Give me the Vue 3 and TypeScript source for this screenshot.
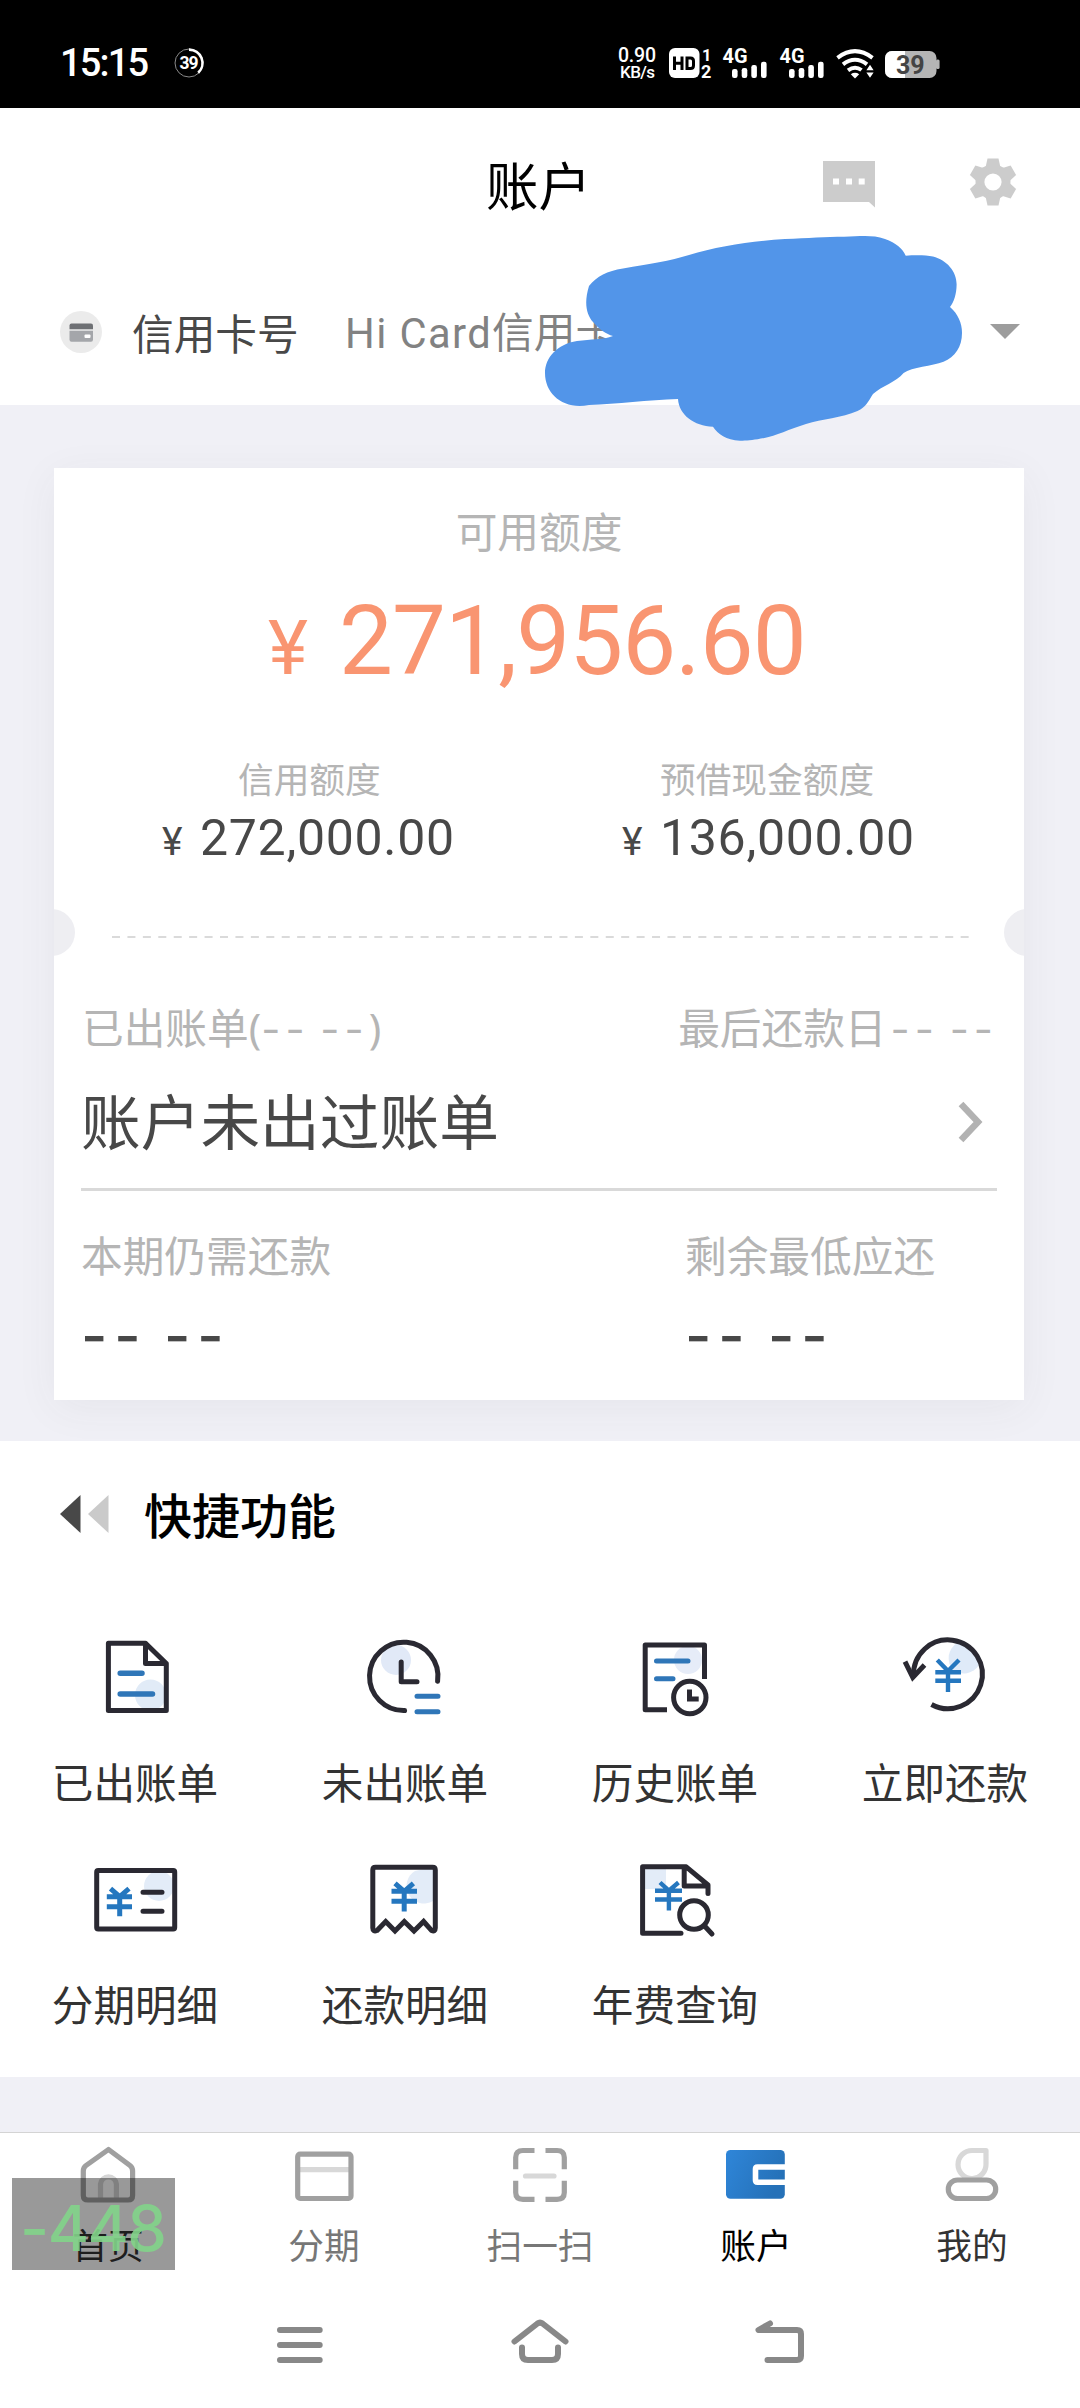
<script setup lang="ts">
interface Shortcut {
  id: string
  label: string
}

interface Tab {
  id: string
  label: string
  tone: string
}

const shortcuts: Shortcut[] = [
  { id: 'billed', label: '已出账单' },
  { id: 'unbilled', label: '未出账单' },
  { id: 'history', label: '历史账单' },
  { id: 'repay', label: '立即还款' },
  { id: 'instalment', label: '分期明细' },
  { id: 'repayments', label: '还款明细' },
  { id: 'fee', label: '年费查询' },
]

const tabs: Tab[] = [
  { id: 'home', label: '首页', tone: 'dark' },
  { id: 'card', label: '分期', tone: 'muted' },
  { id: 'scan', label: '扫一扫', tone: 'muted' },
  { id: 'wallet', label: '账户', tone: 'active' },
  { id: 'me', label: '我的', tone: 'dark' },
]

const signalOffsets: number[] = [0, 57]
</script>

<template>
  <div class="screen">
    <div class="status">
      <span class="clock">15:15</span>
      <svg class="ring" width="32" height="32" viewBox="0 0 32 32">
        <circle cx="16" cy="16" r="14" fill="none" stroke="#8a8a8a" stroke-width="1" />
        <path d="M16 2.6A13.4 13.4 0 0 1 25.2 25.8" fill="none" stroke="#fff" stroke-width="2.6" />
        <text x="16" y="22.4" text-anchor="middle" class="st bold" font-size="17.5" fill="#fff" textLength="19">39</text>
      </svg>
      <svg class="indicators" width="330" height="40" viewBox="614 43 330 40">
        <text x="618" y="62" class="st" font-size="19.5" fill="#fff" textLength="38">0.90</text>
        <text x="620" y="78" class="st" font-size="17" fill="#fff" textLength="35">KB/s</text>
        <rect x="669" y="48" width="30.5" height="30" rx="6" fill="#fff" />
        <path d="M674.5 56.5V70M682 56.5V70M674.5 63.2H682M687 58H690.5Q693.5 58 693.5 61V65.5Q693.5 68.5 690.5 68.5H687Z" fill="none" stroke="#000" stroke-width="3" />
        <text x="702" y="60.5" class="st bold" font-size="16.5" fill="#fff">1</text>
        <text x="701" y="78" class="st bold" font-size="18" fill="#fff">2</text>
        <g v-for="dx in signalOffsets" :key="dx" :transform="`translate(${dx} 0)`" fill="#fff">
          <text x="722.5" y="63" class="st bold" font-size="20.5" textLength="25" lengthAdjust="spacingAndGlyphs">4G</text>
          <rect x="732" y="69" width="5.6" height="9" rx="2.2" />
          <rect x="741.7" y="68" width="5.6" height="10" rx="2.2" />
          <rect x="751.3" y="65" width="5.6" height="13" rx="2.2" />
          <rect x="761" y="61.7" width="5.6" height="16.3" rx="2.2" />
        </g>
        <g fill="none" stroke="#fff" stroke-width="4">
          <path d="M837.5 57.8Q855 44.500 872.500 57.800" />
          <path d="M843 64.300Q855 55.200 867 64.300" />
          <path d="M848 70.300Q855 65.200 861.500 70" />
        </g>
        <path d="M850.800 74.200Q855 71.400 859.200 74.200L855 78.600Z" fill="#fff" />
        <path d="M870 64.800L873.600 70.200H866.400ZM870 77.800L873.600 72.400H866.400Z" fill="#fff" />
        <rect x="885" y="51" width="51.500" height="27" rx="7" fill="#b5b5b5" />
        <path d="M892 51H905V78H892A7 7 0 0 1 885 71V58A7 7 0 0 1 892 51Z" fill="#fff" />
        <rect x="936" y="59.500" width="3.600" height="9.500" rx="1.500" fill="#b5b5b5" />
        <text x="896" y="73.600" class="st bold" font-size="25" fill="#444" textLength="28.500">39</text>
      </svg>
    </div>

    <header class="titlebar">
      <h1>账户</h1>
      <svg class="chat" width="54" height="50" viewBox="0 0 54 50">
        <path d="M1 2H53V48.500L47 43H1Z" fill="#ccc" />
        <path d="M11 19.500h6v6h-6zM24 19.500h6v6h-6zM36.700 19.500h6v6h-6z" fill="#fff" />
      </svg>
      <svg class="gear" width="56" height="56" viewBox="-28 -28 56 56">
        <g fill="#ccc">
          <circle r="17.500" />
          <path v-for="a in [0, 60, 120]" :key="a" :transform="`rotate(${a})`" d="M-5.500 -23.500H5.500L8 -12V12L5.500 23.500H-5.500L-8 12V-12Z" />
        </g>
        <circle r="8.600" fill="#fff" />
      </svg>
    </header>

    <div class="cardrow">
      <svg width="42" height="42" viewBox="0 0 42 42">
        <circle cx="21" cy="21" r="21" fill="#ebebeb" />
        <path d="M9.500 18.200V14.500Q9.500 12.500 11.500 12.500H31Q33 12.500 33 14.500V18.200Z" fill="#6e7074" />
        <path d="M9.500 19.700H33V28.500Q33 30.700 31 30.700H11.500Q9.500 30.700 9.500 28.500Z" fill="#a4a6aa" />
        <rect x="24.500" y="23.500" width="6" height="3.600" rx="1" fill="#fff" />
      </svg>
      <span class="rowlabel">信用卡号</span>
      <span class="rowvalue"><span class="latin">Hi Card</span>信用卡</span>
      <svg class="caret" width="30" height="16" viewBox="0 0 30 16"><path d="M0 0H30L15 15Z" fill="#9d9d9d" /></svg>
      <svg class="scribble" width="430" height="220" viewBox="540 230 430 220">
        <path
          d="M593 322C586 314 584 302 589 286C597 276 607 271 623 268.500C650 264 670 261 689 255C718 246 755 241 785 239C808 238 826 236.700 844 236.700C860 236.500 872 234.500 885 239C896 243 903 249 905.700 255.700C915 255 926 255 933 256.500C947 260 957 272 956.600 285C956.500 294 954 302 950 307C958 314 962 323 962 333C962 347 955 357 943.500 361.700C932 366 912 367 903.600 373C896 382 882 386 873 394C868 402 866 407 857.500 411C842 418 822 419 806 424C790 429 775 436 764.500 438C754 440 747 441 740 440.700C726 440 718 434 713 426.700C694 426 679 415 678 399C648 400 617 404 589 405C563 410 545 394 545 373C545 358 557 344 577 341C591 339 603 340 613 336C606 334 600 330 593 322Z"
          fill="#5295e9"
        />
      </svg>
    </div>

    <main class="canvas">
      <section class="bill">
        <p class="grey avail">可用额度</p>
        <p class="amount"><span class="yen">¥</span>271,956.60</p>
        <div class="limits">
          <div class="limit">
            <p class="grey small">信用额度</p>
            <p class="sum"><span class="yen">¥</span>272,000.00</p>
          </div>
          <div class="limit cash">
            <p class="grey small">预借现金额度</p>
            <p class="sum"><span class="yen">¥</span>136,000.00</p>
          </div>
        </div>
        <div class="tear">
          <i class="notch left"></i>
          <svg width="858" height="4" viewBox="0 0 858 4"><path d="M1 2H858" stroke="#dadada" stroke-width="2" stroke-dasharray="8 7.430" /></svg>
          <i class="notch right"></i>
        </div>
        <div class="pair grey head">
          <span>已出账单<span class="paren">(</span><span class="dash">-- --</span><span class="paren">)</span></span>
          <span>最后还款日<span class="dash due">-- --</span></span>
        </div>
        <div class="pair none">
          <span>账户未出过账单</span>
          <svg width="28" height="44" viewBox="0 0 28 44"><path d="M3 4L20 22L3 40" fill="none" stroke="#b2b2b2" stroke-width="6.500" /></svg>
        </div>
        <div class="rule"></div>
        <div class="dues">
          <div class="duecol">
            <p class="grey">本期仍需还款</p>
            <p class="bigdash">-- --</p>
          </div>
          <div>
            <p class="grey">剩余最低应还</p>
            <p class="bigdash">-- --</p>
          </div>
        </div>
      </section>
    </main>

    <section class="quick">
      <div class="quickhead">
        <svg width="50" height="38" viewBox="0 0 50 38">
          <path d="M0 19L20.500 0V38Z" fill="#484848" />
          <path d="M28 19L48.500 0V38Z" fill="#cacaca" />
        </svg>
        <h2>快捷功能</h2>
      </div>
      <div class="grid">
        <div v-for="s in shortcuts" :key="s.id" class="cell">
          <svg width="100" height="100" viewBox="0 0 100 100" fill="none" stroke="#2a2932" stroke-width="5" stroke-linecap="round" stroke-linejoin="round">
            <template v-if="s.id === 'billed'">
              <circle cx="65.500" cy="67" r="15.500" fill="#e1ebf7" stroke="none" />
              <path d="M23.400 15.300H60.500L81.300 35.500V82.600H23.400ZM60.500 15.300V35.500H81.300" />
              <path d="M35.200 45.300H57M35.200 66H67.500" stroke="#2f76b8" stroke-width="5.500" />
            </template>
            <template v-else-if="s.id === 'unbilled'">
              <circle cx="41" cy="32" r="15" fill="#e1e9f7" stroke="none" />
              <path d="M82.600 53.200A34.200 34.200 0 1 0 49.600 82.600M46.200 34V53.700H62" />
              <path d="M62 68.300H83M62 83.700H83" stroke="#2f76b8" />
            </template>
            <template v-else-if="s.id === 'history'">
              <circle cx="63" cy="32" r="14" fill="#e6ecf8" stroke="none" />
              <path d="M79.500 51V17H20.200V81.800H42" stroke-linecap="butt" />
              <circle cx="64.800" cy="69.500" r="16.200" />
              <path d="M64.500 61.500V71H73.700" stroke-linecap="butt" stroke-linejoin="miter" />
              <path d="M31.500 33H63M31.500 50.700H48" stroke="#2f76b8" />
            </template>
            <template v-else-if="s.id === 'repay'">
              <path d="M58 42A18 18 0 0 1 62 15Q78 20 84 37A18 18 0 0 1 58 42Z" fill="#dfeaf8" stroke="none" />
              <path d="M18.600 48A34.400 34.400 0 1 1 36.500 76.500" stroke-linecap="butt" />
              <path d="M10 33.700L17.800 49.500L29.500 37" stroke-linecap="butt" stroke-linejoin="miter" />
              <path d="M42.300 32L53 43L64 32M53 43V64M40.300 44.300H66M40.300 52.700H66" stroke="#2577bf" stroke-width="4.400" stroke-linecap="butt" />
            </template>
            <template v-else-if="s.id === 'instalment'">
              <circle cx="74" cy="36" r="15" fill="#e3ecf8" stroke="none" />
              <rect x="11.700" y="20.600" width="78" height="58.400" rx="1.500" />
              <path d="M58 42.300H77M58 61.300H77" />
              <path d="M25.500 38.700L34.700 46.700L44 38.700M34.700 46.700V66.300M21.800 46.700H47M21.800 56.700H47" stroke="#2577bf" stroke-linecap="butt" />
            </template>
            <template v-else-if="s.id === 'repayments'">
              <path d="M78 17V51A15.500 15.500 0 1 1 60 21Z" fill="#e3ecf8" stroke="none" />
              <path d="M17.800 78V20Q17.800 17.300 20.500 17.300H77.600Q80.300 17.300 80.300 20V78Q80.300 82 76.500 80.500L68.600 71.500L59 81L49.300 71.500L40 81L30.700 71.500L22 80.500Q17.800 82 17.800 78Z" stroke-linejoin="miter" />
              <path d="M40 33.300L49.200 41.300L58.400 33.300M49.200 41.300V61.500M36.500 41.300H62M36.500 51.300H62" stroke="#2577bf" stroke-linecap="butt" />
            </template>
            <template v-else>
              <path d="M18 18H41V34L36 39H18Z" fill="#e3ecf8" stroke="none" />
              <path d="M56 83.300H17.600V16.800H61.200L83 35V43.500M59.200 16.800V36H83" />
              <circle cx="69" cy="65" r="14.300" />
              <path d="M79.600 76L87 84" />
              <path d="M35 32.500L43.900 40.700L53.500 32.500M43.900 40.700V60.500M30 40.700H57M30 49.500H57" stroke="#2577bf" stroke-width="4.400" stroke-linecap="butt" />
            </template>
          </svg>
          <span>{{ s.label }}</span>
        </div>
      </div>
    </section>

    <div class="gap"></div>

    <nav class="tabs">
      <div v-for="t in tabs" :key="t.id" class="tab" :class="t.tone">
        <svg width="70" height="70" viewBox="0 0 70 70" fill="none" stroke="#a0a0a0" stroke-width="5.200" stroke-linejoin="round">
          <template v-if="t.id === 'home'">
            <path d="M27.500 60V44A8 8 0 0 1 43.400 44V60" stroke="#d6d6d6" />
            <path d="M35.500 9.500L13 25.500Q10.300 27.500 10.300 31V55.500Q10.300 60 15 60H55Q59.600 60 59.600 55.500V31Q59.600 27.500 57 25.500Z" />
          </template>
          <template v-else-if="t.id === 'card'">
            <path d="M9 29.700H62" stroke="#d8d8d8" />
            <rect x="8.700" y="14.200" width="53.300" height="44.300" rx="2.500" />
          </template>
          <template v-else-if="t.id === 'scan'">
            <path d="M29.500 10.500H18Q10.700 10.500 10.700 17.500V29.300M10.700 40.700V52.500Q10.700 59.300 18 59.300H29.500M40.500 10.500H52Q59.300 10.500 59.300 17.500V29.300M59.300 40.700V52.500Q59.300 59.300 52 59.300H40.500" />
            <path d="M20.500 36H49" stroke="#d8d8d8" stroke-linecap="round" />
          </template>
          <template v-else-if="t.id === 'wallet'">
            <defs>
              <linearGradient id="walletFill" x1="0" y1="0" x2="1" y2="0.400">
                <stop offset="0" stop-color="#2f86d9" />
                <stop offset="1" stop-color="#2571b8" />
              </linearGradient>
            </defs>
            <rect x="5" y="10" width="58.800" height="48.700" rx="4.500" fill="url(#walletFill)" stroke="none" />
            <path d="M64 27H36.500Q34.500 27 34.500 29V40.300Q34.500 42.300 36.500 42.300H64" stroke="#fff" stroke-width="5.600" />
          </template>
          <template v-else>
            <path d="M49 10.500V24A14 14 0 1 1 35 10.500Z" stroke="#d8d8d8" />
            <rect x="11.300" y="40" width="47.400" height="18.500" rx="9.200" />
          </template>
        </svg>
        <span>{{ t.label }}</span>
      </div>
      <div class="meter">-448</div>
    </nav>

    <div class="sysnav">
      <svg width="64" height="54" viewBox="268 2316 64 54"><path d="M280 2330H319.700M280 2345H319.700M280 2360H319.700" /></svg>
      <svg width="64" height="54" viewBox="508 2316 64 54"><path d="M514.500 2341.500L537.500 2323.500Q540 2321.700 542.500 2323.500L565.500 2341.500M522 2347.500V2354Q522 2360 528 2360H552Q558 2360 558 2354V2347.500" /></svg>
      <svg width="64" height="54" viewBox="748 2316 64 54"><path d="M770 2323.500L758.500 2330H797Q801 2330 801 2334V2356Q801 2360 797 2360H767.500" /></svg>
    </div>
  </div>
</template>

<style>
body {
  margin: 0;
  background: #fff;
}
</style>

<style scoped>
.screen {
  width: 1080px;
  height: 2408px;
  display: flex;
  flex-direction: column;
  overflow: hidden;
  background: #fff;
  font-family: 'Noto Sans CJK SC', 'Noto Sans', sans-serif;
  color: #484848;
}
p,
h1,
h2 {
  margin: 0;
  font-weight: 400;
}
svg {
  display: block;
  flex: none;
}
.st {
  font-family: Roboto, sans-serif;
  font-weight: 500;
}
.bold {
  font-weight: 700;
}
.status {
  height: 108px;
  flex: none;
  display: flex;
  align-items: center;
  background: #000;
  box-sizing: border-box;
  padding: 17px 0 0 60px;
}
.clock {
  width: 113px;
  font: 500 38px/44px Roboto, sans-serif;
  letter-spacing: -1.8px;
  color: #fff;
}
.indicators {
  margin-left: 409px;
}
.titlebar {
  height: 150px;
  flex: none;
  display: flex;
  align-items: center;
  padding-left: 486px;
}
.titlebar h1 {
  width: 336px;
  font-size: 52.5px;
  line-height: 60px;
  color: #000;
}
.chat {
  margin-top: 2px;
}
.gear {
  margin: -3px 0 0 89px;
}
.cardrow {
  position: relative;
  height: 147px;
  flex: none;
  display: flex;
  align-items: center;
  padding-left: 60px;
}
.rowlabel {
  margin-left: 30px;
  width: 167px;
  font-size: 41.7px;
  line-height: 60px;
}
.rowvalue {
  margin-left: 46px;
  width: 278px;
  font-size: 41.7px;
  line-height: 60px;
  color: #828282;
  white-space: nowrap;
}
.latin {
  font-family: Roboto, sans-serif;
  letter-spacing: 1.4px;
}
.caret {
  margin-left: 367px;
}
.scribble {
  position: absolute;
  left: 540px;
  top: -28px;
  z-index: 2;
}
.canvas {
  height: 1036px;
  flex: none;
  box-sizing: border-box;
  padding: 63px 56px 0 54px;
  background: #f0f0f6;
}
.bill {
  height: 932px;
  background: #fff;
  box-shadow: 0 8px 40px rgba(60, 60, 60, 0.06);
  display: flex;
  flex-direction: column;
  box-sizing: border-box;
  padding-top: 32px;
}
.grey {
  color: #b5b5b5;
  font-size: 41.7px;
  line-height: 60px;
}
.avail {
  text-align: center;
}
.amount {
  height: 136px;
  padding: 26px 0 0 214px;
  font-family: Roboto, sans-serif;
  font-size: 96px;
  line-height: 110px;
  letter-spacing: -0.9px;
  color: #f99571;
  white-space: nowrap;
}
.yen {
  display: inline-block;
  font-family: Roboto, sans-serif;
  line-height: 1;
}
.amount .yen {
  width: 71px;
  font-size: 76px;
}
.limits {
  display: flex;
  height: 166px;
  padding: 26px 0 0 108px;
  box-sizing: border-box;
}
.limit {
  width: 460px;
  flex: none;
}
.small {
  font-size: 35.7px;
  line-height: 60px;
}
.limit .small {
  padding-left: 76px;
}
.limit.cash .small {
  padding-left: 38px;
}
.sum {
  font: 400 50px/60px Roboto, sans-serif;
  letter-spacing: 0.7px;
  white-space: nowrap;
}
.sum .yen {
  width: 38px;
  font-size: 39px;
}
.tear {
  height: 47px;
  margin-top: 21px;
  display: flex;
  align-items: center;
  justify-content: space-between;
  overflow: hidden;
}
.tear svg {
  margin-top: 8px;
}
.notch {
  width: 47px;
  height: 47px;
  border-radius: 50%;
  background: #eeeef2;
  flex: none;
}
.notch.left {
  margin-left: -26px;
}
.notch.right {
  margin-right: -27px;
}
.pair {
  display: flex;
  justify-content: space-between;
  align-items: center;
  white-space: nowrap;
}
.pair.head {
  margin-top: 40px;
  padding: 0 26px 0 28px;
}
.paren {
  font-family: 'Noto Sans', sans-serif;
  font-weight: 400;
  line-height: 1;
}
.dash {
  font-family: Inter, sans-serif;
  font-size: 41.7px;
  line-height: 1;
  letter-spacing: 5px;
  word-spacing: -6px;
}
.due {
  margin-left: 4px;
}
.pair.none {
  height: 80px;
  margin-top: 23px;
  padding: 0 38px 0 27px;
  font-size: 59.7px;
  line-height: 80px;
}
.pair.none svg {
  margin-top: 5px;
}
.rule {
  height: 3px;
  margin: 29px 27px 0;
  background: #d9d9d9;
}
.dues {
  display: flex;
  padding: 33px 0 0 27px;
}
.duecol {
  width: 604px;
}
.bigdash {
  font: 500 57px/80px Inter, sans-serif;
  letter-spacing: 7px;
  word-spacing: -6px;
  margin-top: 12px;
}
.quick {
  height: 636px;
  flex: none;
}
.quickhead {
  display: flex;
  align-items: center;
  height: 60px;
  padding: 43px 0 1px 60px;
}
.quickhead h2 {
  margin: -2px 0 0 34px;
  font-size: 48px;
  line-height: 60px;
  font-weight: 500;
  color: #000;
}
.grid {
  display: grid;
  grid-template-columns: repeat(4, 270px);
  grid-auto-rows: 222px;
  padding-top: 83px;
}
.cell {
  display: flex;
  flex-direction: column;
  align-items: center;
}
.cell span {
  margin-top: 23px;
  font-size: 41.6px;
  line-height: 60px;
  color: #333;
}
.gap {
  height: 55px;
  flex: none;
  background: #f0f0f6;
}
.tabs {
  position: relative;
  height: 148px;
  flex: none;
  box-sizing: border-box;
  border-top: 1px solid #d4d4d4;
  display: flex;
}
.tab {
  width: 216px;
  display: flex;
  flex-direction: column;
  align-items: center;
  padding-top: 7px;
}
.tab span {
  margin-top: 9px;
  font-size: 35.7px;
  line-height: 50px;
}
.dark {
  color: #333;
}
.muted {
  color: #777;
}
.active {
  color: #000;
}
.meter {
  position: absolute;
  left: 12px;
  top: 45px;
  width: 163px;
  height: 92px;
  box-sizing: border-box;
  padding-left: 8px;
  background: rgba(0, 0, 0, 0.4);
  color: rgba(130, 212, 138, 0.9);
  font: 500 63px/100px Inter, sans-serif;
  letter-spacing: -1.5px;
}
.sysnav {
  flex: 1;
  display: flex;
  justify-content: center;
  gap: 176px;
  padding-top: 36px;
}
.sysnav path {
  fill: none;
  stroke: #888;
  stroke-width: 6px;
  stroke-linecap: round;
  stroke-linejoin: round;
}
</style>
